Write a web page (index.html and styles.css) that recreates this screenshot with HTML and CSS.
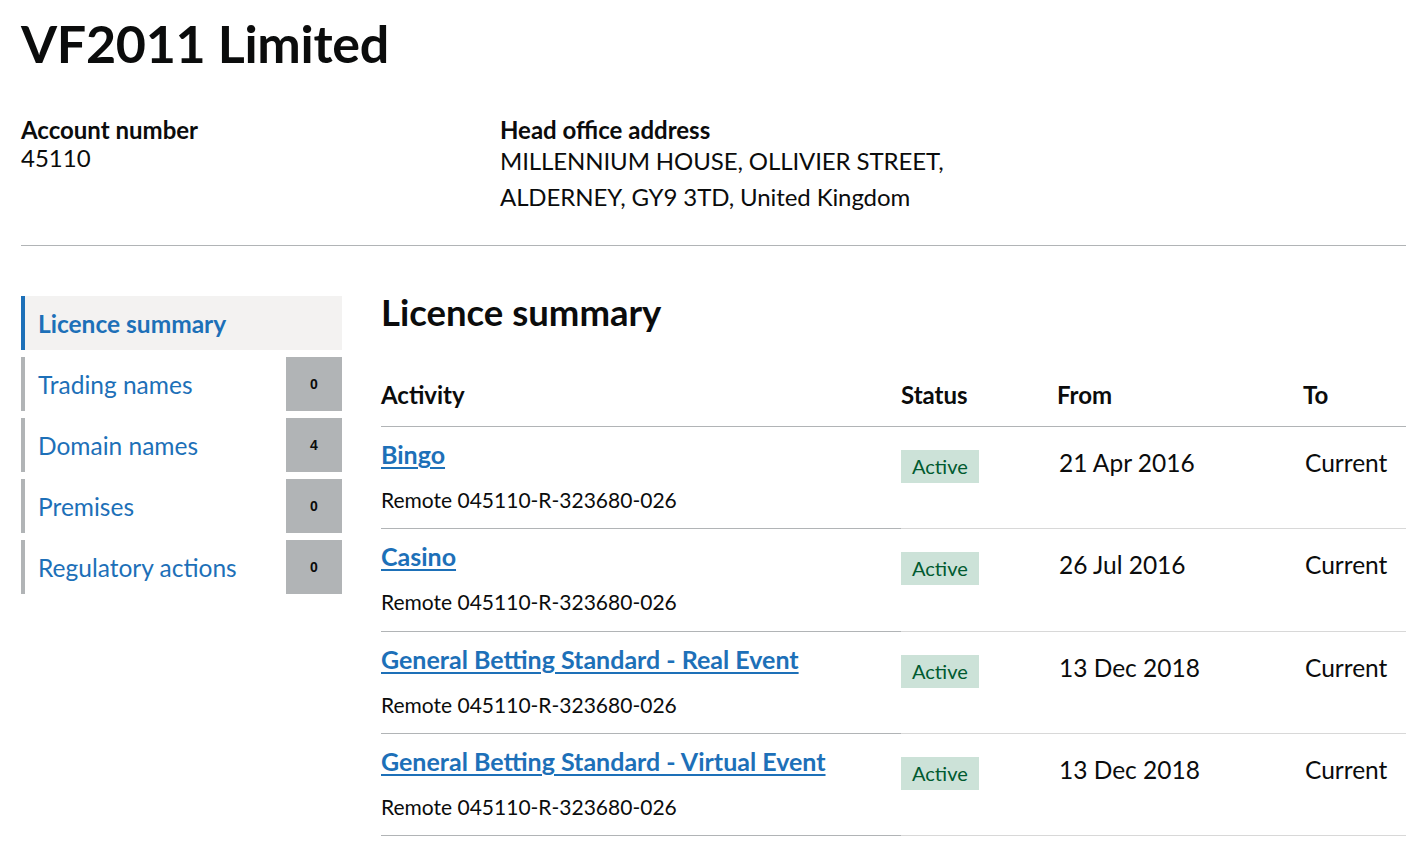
FILE: index.html
```html
<!DOCTYPE html>
<html lang="en">
<head>
<meta charset="utf-8">
<title>VF2011 Limited</title>
<link rel="stylesheet" href="styles.css">
</head>
<body>
<div class="page">
  <h1 class="title">VF2011 Limited</h1>
  <div class="details">
    <div class="detail">
      <div class="label">Account number</div>
      <div class="value">45110</div>
    </div>
    <div class="detail">
      <div class="label">Head office address</div>
      <div class="value address">MILLENNIUM HOUSE, OLLIVIER STREET,<br>ALDERNEY, GY9 3TD, United Kingdom</div>
    </div>
  </div>
  <hr class="rule">
  <div class="layout">
    <nav class="sidenav">
      <a class="nav-item active" href="#"><span class="nav-label">Licence summary</span></a>
      <a class="nav-item" href="#"><span class="nav-label">Trading names</span><span class="count">0</span></a>
      <a class="nav-item" href="#"><span class="nav-label">Domain names</span><span class="count">4</span></a>
      <a class="nav-item" href="#"><span class="nav-label">Premises</span><span class="count">0</span></a>
      <a class="nav-item" href="#"><span class="nav-label">Regulatory actions</span><span class="count">0</span></a>
    </nav>
    <main class="main">
      <h2 class="section-title">Licence summary</h2>
      <table class="licences">
        <thead>
          <tr>
            <th class="col-activity">Activity</th>
            <th class="col-status">Status</th>
            <th class="col-from">From</th>
            <th class="col-to">To</th>
          </tr>
        </thead>
        <tbody>
          <tr>
            <td class="col-activity"><div class="activity"><a class="activity-link" href="#">Bingo</a></div><div class="ref">Remote 045110-R-323680-026</div></td>
            <td class="col-status"><span class="tag">Active</span></td>
            <td class="col-from">21 Apr 2016</td>
            <td class="col-to">Current</td>
          </tr>
          <tr>
            <td class="col-activity"><div class="activity"><a class="activity-link" href="#">Casino</a></div><div class="ref">Remote 045110-R-323680-026</div></td>
            <td class="col-status"><span class="tag">Active</span></td>
            <td class="col-from">26 Jul 2016</td>
            <td class="col-to">Current</td>
          </tr>
          <tr>
            <td class="col-activity"><div class="activity"><a class="activity-link" href="#">General Betting Standard - Real Event</a></div><div class="ref">Remote 045110-R-323680-026</div></td>
            <td class="col-status"><span class="tag">Active</span></td>
            <td class="col-from">13 Dec 2018</td>
            <td class="col-to">Current</td>
          </tr>
          <tr>
            <td class="col-activity"><div class="activity"><a class="activity-link" href="#">General Betting Standard - Virtual Event</a></div><div class="ref">Remote 045110-R-323680-026</div></td>
            <td class="col-status"><span class="tag">Active</span></td>
            <td class="col-from">13 Dec 2018</td>
            <td class="col-to">Current</td>
          </tr>
        </tbody>
      </table>
    </main>
  </div>
</div>
</body>
</html>
```
FILE: styles.css
```css
* { box-sizing: border-box; }
html, body { margin: 0; padding: 0; background: #fff; }
body {
  font-family: Lato, "Noto Sans", "Liberation Sans", sans-serif;
  color: #0b0c0c;
}
.page { padding: 0 0 0 21px; }

.title {
  margin: 0;
  padding-top: 14px;
  font-size: 52px;
  line-height: 58px;
  font-weight: 700;
  letter-spacing: -0.3px;
}

.details {
  display: grid;
  grid-template-columns: 479px 1fr;
  margin-top: 44px;
}
.label { font-weight: 700; font-size: 24px; line-height: 28px; }
.value { font-size: 24px; line-height: 28px; }
.address { line-height: 36px; margin-top: -1px; letter-spacing: -0.1px; }

.rule {
  border: 0;
  border-top: 1px solid #b1b4b6;
  margin: 30px 0 0 0;
  height: 0;
}

.layout {
  display: flex;
  gap: 39px;
  margin-top: 50px;
}

.sidenav {
  width: 321px;
  flex: 0 0 321px;
  display: flex;
  flex-direction: column;
  gap: 7px;
}
.nav-item {
  display: flex;
  align-items: stretch;
  justify-content: space-between;
  height: 54px;
  border-left: 4px solid #b1b4b6;
  text-decoration: none;
  color: #1d70b8;
}
.nav-item .nav-label {
  display: flex;
  align-items: center;
  padding-left: 13px;
  font-size: 24.5px;
}
.nav-item.active {
  background: #f3f2f1;
  border-left-color: #1d70b8;
}
.nav-item.active .nav-label { font-weight: 700; }
.count {
  width: 56px;
  background: #b1b4b6;
  color: #0b0c0c;
  font-family: "Liberation Sans", Arial, sans-serif;
  font-weight: 700;
  font-size: 14px;
  display: flex;
  align-items: center;
  justify-content: center;
}

.main { flex: 1; }
.section-title {
  margin: 0;
  font-size: 36.5px;
  line-height: 32px;
  font-weight: 700;
}

.licences {
  width: 100%;
  border-collapse: collapse;
  margin-top: 53px;
}
.licences th {
  text-align: left;
  font-weight: 700;
  font-size: 24px;
  line-height: 28px;
  padding: 0 0 17px 0;
  border-bottom: 1px solid #b1b4b6;
}
.licences td {
  vertical-align: top;
  padding: 0;
  border-bottom: 1px solid #d8d8d8;
  font-size: 24.5px;
  line-height: 28px;
}
.licences td.col-activity { border-bottom-color: #b1b4b6; padding: 12px 20px 15.33px 0; }
.col-activity { width: 520px; }
.col-status { width: 156px; }
.col-from { width: 246px; }
.licences td.col-from, .licences td.col-to { padding-top: 22px; padding-left: 2px; }
.licences td.col-status { padding-top: 23px; }

.activity { line-height: 30px; }
.activity-link {
  color: #1d70b8;
  font-weight: 700;
  font-size: 25px;
  text-decoration: underline;
  text-decoration-thickness: 2px;
  text-underline-offset: 3px;
}
.ref {
  font-size: 21px;
  line-height: 26px;
  margin-top: 17px;
}
.tag {
  display: inline-block;
  background: #cce2d8;
  color: #005a30;
  font-size: 20px;
  line-height: 33px;
  padding: 0 11px;
}
```
